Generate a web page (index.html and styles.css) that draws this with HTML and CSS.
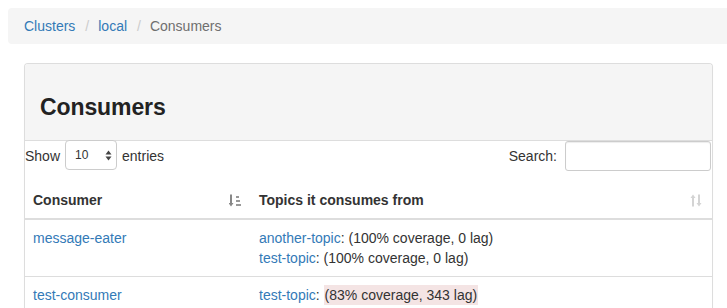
FILE: index.html
```html
<!DOCTYPE html>
<html>
<head>
<meta charset="utf-8">
<title>Consumers</title>
<link rel="stylesheet" href="styles.css">
</head>
<body>
<ol class="breadcrumb">
  <li><a href="#">Clusters</a></li>
  <li class="sep">/</li>
  <li><a href="#">local</a></li>
  <li class="sep">/</li>
  <li class="active">Consumers</li>
</ol>
<div class="panel">
  <div class="panel-heading">
    <h1>Consumers</h1>
  </div>
  <div class="controls">
    <label class="length">Show
      <span class="select-wrap">
        <select><option>10</option><option>25</option></select>
        <svg class="select-arrow" width="7" height="11" viewBox="0 0 7 11"><path d="M3.5 0.5 L6.5 4.5 H0.5 Z M3.5 10.5 L6.5 6.5 H0.5 Z" fill="#444"/></svg>
      </span>
      entries</label>
    <label class="search">Search: <input type="search"></label>
  </div>
  <table class="table">
    <thead>
      <tr>
        <th class="col1">Consumer
          <svg class="sort" width="12" height="13" viewBox="0 0 12 13"><path d="M2 0.5 V10" stroke="#888" stroke-width="2"/><path d="M-0.5 9 H4.5 L2 12.5 Z" fill="#888"/><rect x="7" y="2" width="3" height="2" fill="#999"/><rect x="7" y="6" width="4" height="2" fill="#999"/><rect x="7" y="10" width="5" height="2" fill="#999"/></svg>
        </th>
        <th>Topics it consumes from
          <svg class="sort" width="12" height="13" viewBox="0 0 12 13"><path d="M3 3 V12.5" stroke="#d4d4d4" stroke-width="2"/><path d="M0.5 4 H5.5 L3 0.5 Z" fill="#d4d4d4"/><path d="M9 0.5 V10" stroke="#d4d4d4" stroke-width="2"/><path d="M6.5 9 H11.5 L9 12.5 Z" fill="#d4d4d4"/></svg>
        </th>
      </tr>
    </thead>
    <tbody>
      <tr>
        <td><a href="#">message-eater</a></td>
        <td><a href="#">another-topic</a>: (100% coverage, 0 lag)<br><a href="#">test-topic</a>: (100% coverage, 0 lag)</td>
      </tr>
      <tr>
        <td><a href="#">test-consumer</a></td>
        <td><a href="#">test-topic</a>: <span class="warn">(83% coverage, 343 lag)</span></td>
      </tr>
    </tbody>
  </table>
</div>
</body>
</html>
```
FILE: styles.css
```css
html, body {
  margin: 0;
  padding: 0;
  background: #fff;
}
body {
  padding: 8px 0 0 8px;
  font-family: "Liberation Sans", Arial, sans-serif;
  font-size: 14px;
  line-height: 20px;
  color: #333;
  overflow: hidden;
}
a {
  color: #337ab7;
  text-decoration: none;
}
.breadcrumb {
  list-style: none;
  margin: 0 0 19px 0;
  padding: 8px 16px;
  background: #f5f5f5;
  border-radius: 4px 0 0 4px;
  display: flex;
  height: 20px;
}
.breadcrumb li.sep {
  color: #ccc;
  padding: 0 9px 0 10px;
}
.breadcrumb li.active {
  color: #6f6f6f;
}
.panel {
  margin-left: 16px;
  width: 689px;
  border: 1px solid #ddd;
  border-bottom: none;
  border-radius: 4px 4px 0 0;
  box-sizing: border-box;
  box-shadow: 0 1px 1px rgba(0,0,0,0.05);
}
.panel-heading {
  background: #f5f5f5;
  border-bottom: 1px solid #ddd;
  padding: 10px 15px;
  border-radius: 3px 3px 0 0;
}
.panel-heading h1 {
  margin: 20px 0 10px;
  font-size: 23px;
  line-height: 26px;
  font-weight: bold;
  color: #222;
  letter-spacing: -0.1px;
}
.controls {
  display: flex;
  justify-content: space-between;
  align-items: center;
  height: 30px;
  padding: 0 1px 0 0;
}
.length {
  display: flex;
  align-items: center;
  gap: 5px;
}
.select-wrap {
  position: relative;
  display: inline-block;
  height: 30px;
}
.select-wrap select {
  appearance: none;
  -webkit-appearance: none;
  width: 52px;
  height: 30px;
  box-sizing: border-box;
  border: 1px solid #ccc;
  border-radius: 4px;
  background: #fff;
  font-family: "Liberation Sans", Arial, sans-serif;
  font-size: 12px;
  color: #333;
  padding: 0 0 0 9px;
  margin: -1px 0 0 0;
}
.select-arrow {
  position: absolute;
  left: 40px;
  top: 9px;
}
.search {
  display: flex;
  align-items: center;
}
.search input {
  width: 146px;
  height: 30px;
  box-sizing: border-box;
  margin-left: 8px;
  border: 1px solid #ccc;
  border-radius: 3px;
  box-shadow: inset 0 1px 1px rgba(0,0,0,0.075);
  background: #fff;
}
.table {
  width: 100%;
  margin-top: 11px;
  border-collapse: collapse;
  border-spacing: 0;
}
.table th {
  position: relative;
  text-align: left;
  font-weight: bold;
  padding: 8px;
  border-bottom: 2px solid #ddd;
  vertical-align: bottom;
}
.table th.col1 {
  width: 210px;
}
.sort {
  position: absolute;
  right: 10px;
  top: 12px;
}
.table td {
  padding: 8px;
  border-top: 1px solid #ddd;
  vertical-align: top;
}
.warn {
  background: #f4e4e4;
  padding: 2px 1px;
}
```
